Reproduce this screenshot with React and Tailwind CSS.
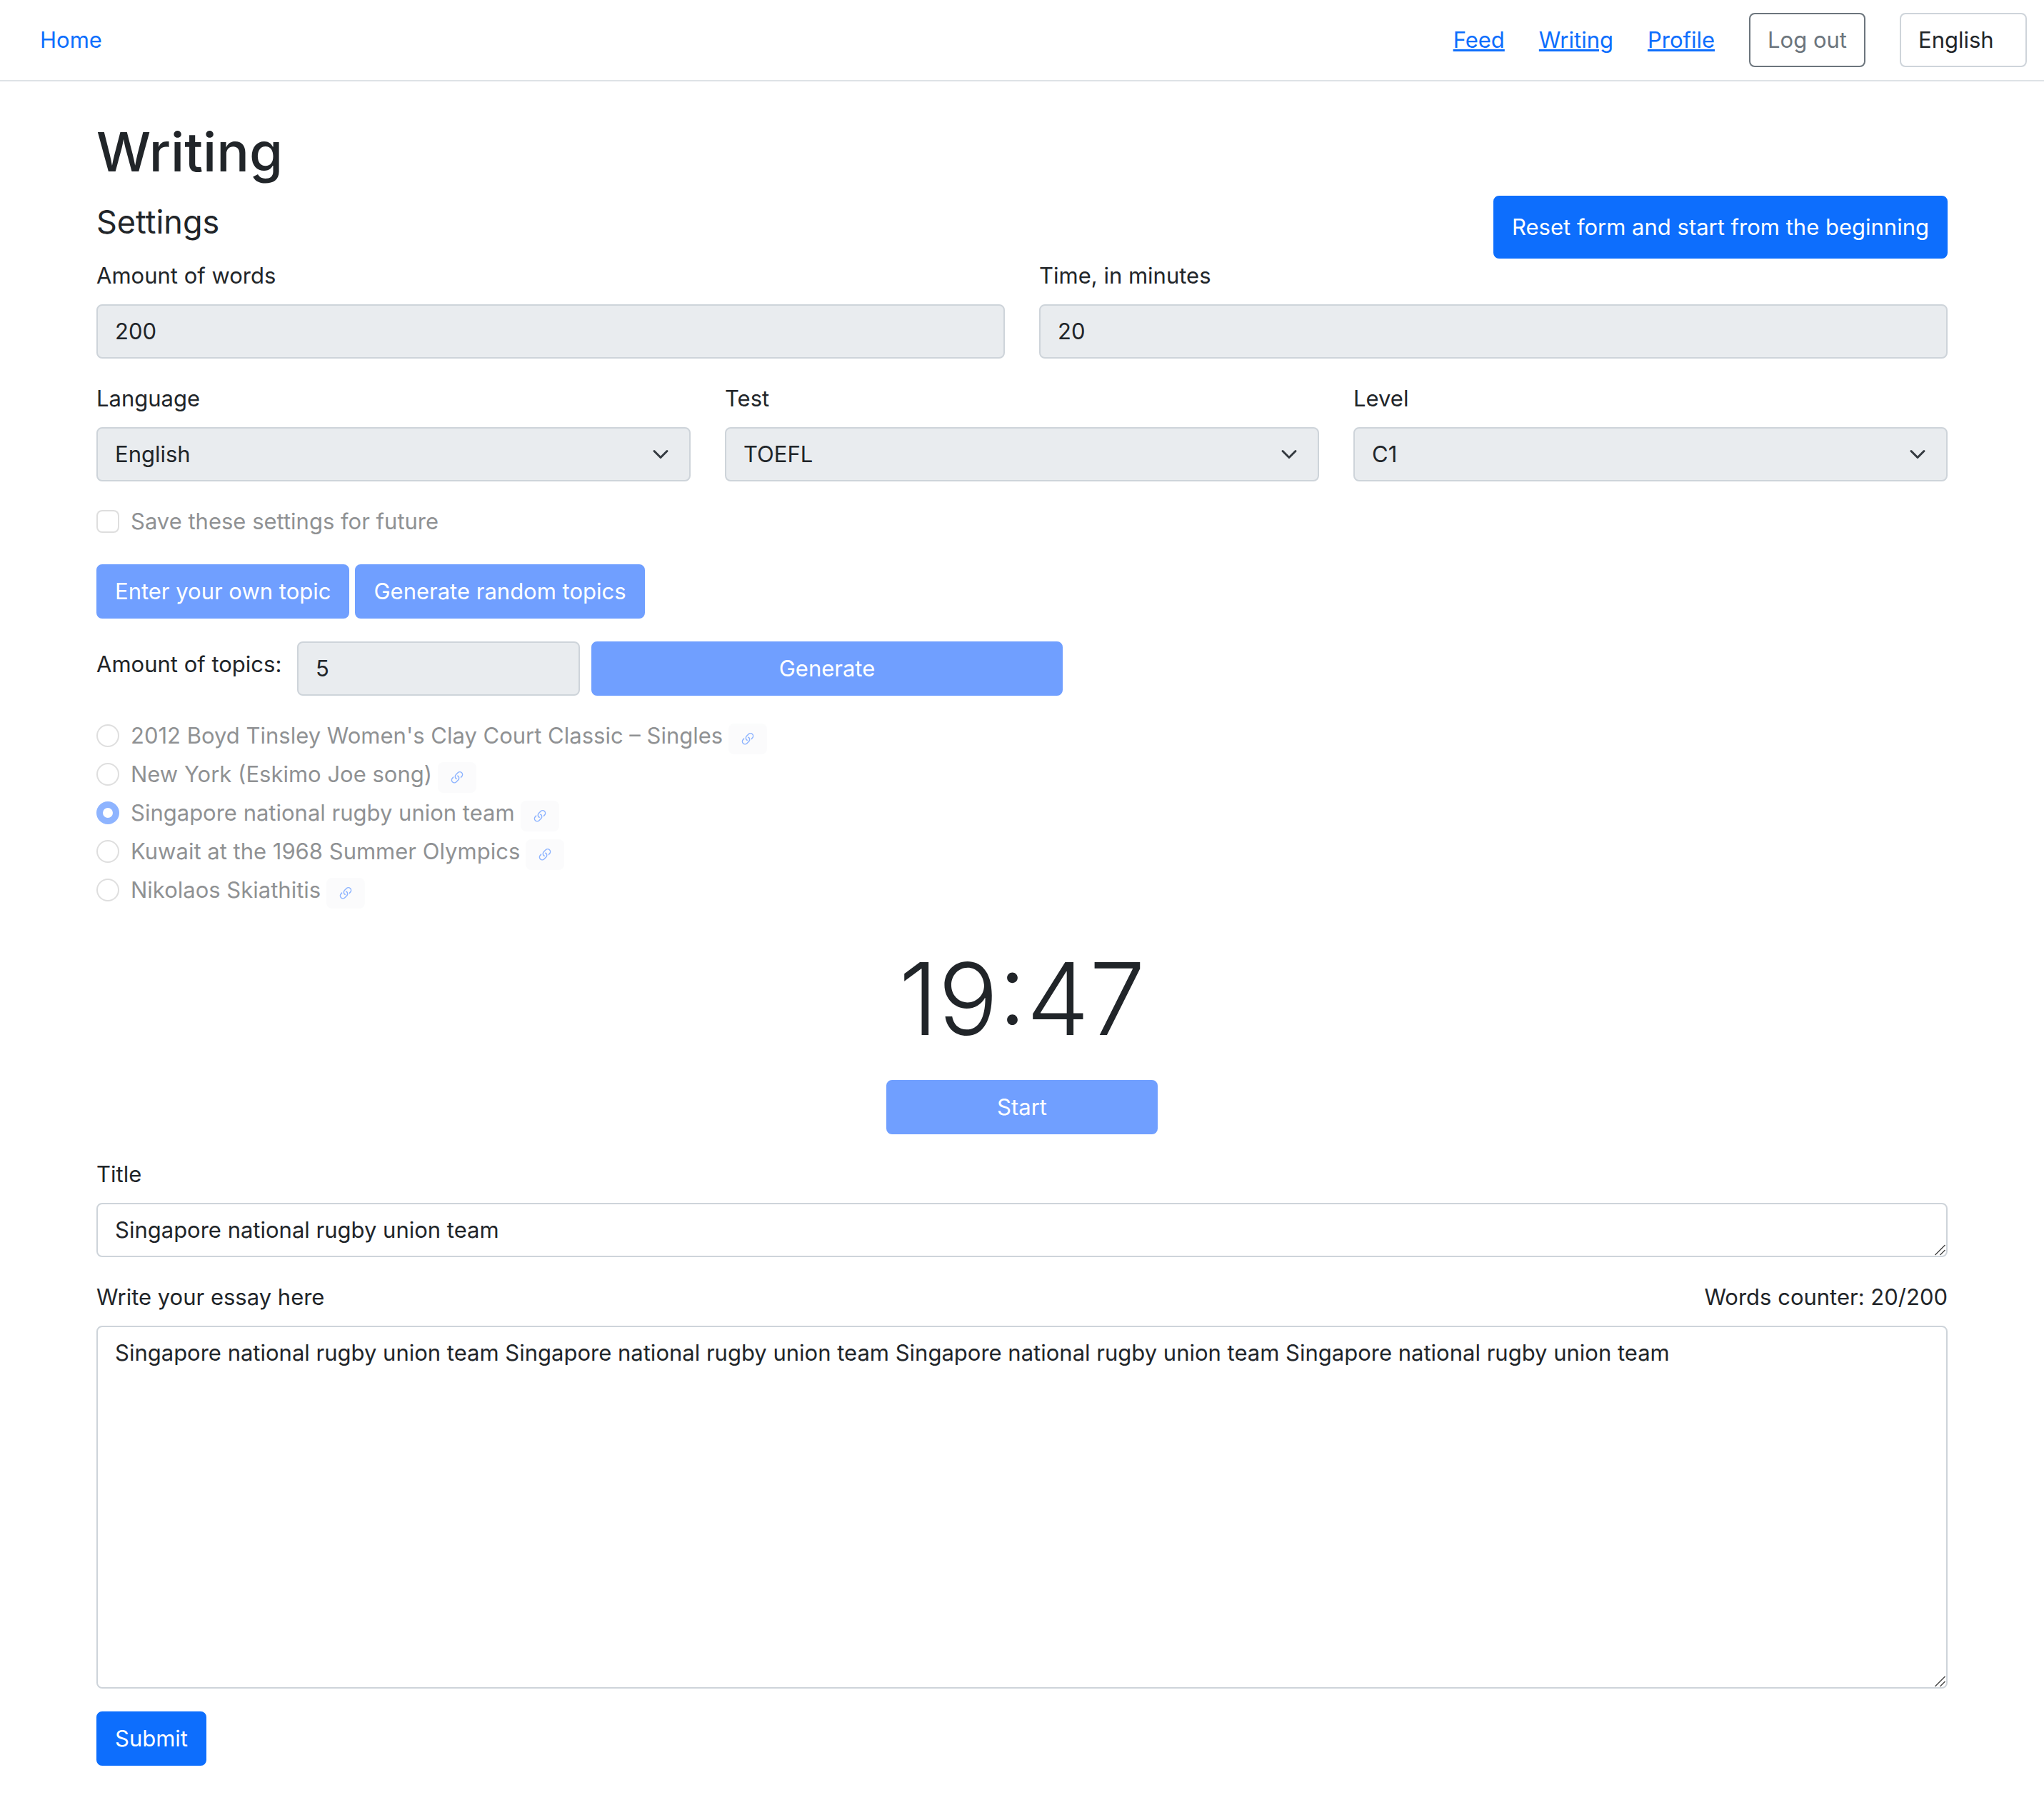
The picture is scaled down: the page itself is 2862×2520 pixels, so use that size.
import { BsLink45Deg } from "react-icons/bs";

const control =
  "block w-full rounded-lg border-2 border-[#ced4da] px-6 py-3 text-[#212529] outline-none disabled:bg-[#e9ecef] disabled:opacity-100";
const primary =
  "rounded-lg border-2 border-[#0d6efd] bg-[#0d6efd] px-6 py-3 text-white disabled:border-[#709fff] disabled:bg-[#709fff]";

const topics = [
  "2012 Boyd Tinsley Women's Clay Court Classic – Singles",
  "New York (Eskimo Joe song)",
  "Singapore national rugby union team",
  "Kuwait at the 1968 Summer Olympics",
  "Nikolaos Skiathitis",
];
const subject = "Singapore national rugby union team";

function Field({ id, label, children }) {
  return (
    <div className="min-w-0 flex-1">
      <label htmlFor={id} className="mb-4 block">
        {label}
      </label>
      {children}
    </div>
  );
}

function Select({ id, value }) {
  return (
    <div className="relative">
      <select id={id} disabled defaultValue={value} className={`${control} appearance-none`}>
        <option>{value}</option>
      </select>
      <svg
        viewBox="0 0 16 16"
        className="pointer-events-none absolute top-1/2 right-[30px] h-6 w-6 -translate-y-1/2"
        fill="none"
        stroke="#343a40"
        strokeWidth="2"
        strokeLinecap="round"
        strokeLinejoin="round"
        aria-hidden="true"
      >
        <path d="M2 5l6 6 6-6" />
      </svg>
    </div>
  );
}

function TextBox({ id, rows, value }) {
  return (
    <div className="relative">
      <textarea id={id} rows={rows} defaultValue={value} className={`${control} resize-none overflow-hidden`} />
      <svg
        viewBox="0 0 16 16"
        className="pointer-events-none absolute right-[2px] bottom-[2px] h-4 w-4"
        stroke="#444"
        strokeWidth="1.4"
        aria-hidden="true"
      >
        <path d="M0.5 15L14.500 1M7.500 15L14.500 8" />
      </svg>
    </div>
  );
}

export default function App() {
  return (
    <div className="min-h-screen bg-white font-['Inter',sans-serif] text-[31px] leading-[48px] text-[#212529]">
      <header className="flex items-center justify-between border-b-2 border-[#dee2e6] py-[18px] pr-6 pl-14">
        <a href="#home" className="text-[#0d6efd]">
          Home
        </a>
        <nav className="flex items-center gap-12">
          {["Feed", "Writing", "Profile"].map((name) => (
            <a key={name} href={`#${name.toLowerCase()}`} className="text-[#0d6efd] underline">
              {name}
            </a>
          ))}
          <button type="button" className="rounded-lg border-2 border-[#6c757d] px-6 py-3 text-[#6c757d]">
            Log out
          </button>
          <select
            aria-label="Site language"
            defaultValue="English"
            className="w-[178px] appearance-none rounded-lg border-2 border-[#ced4da] bg-white px-6 py-3"
          >
            <option>English</option>
          </select>
        </nav>
      </header>

      <main className="mx-auto max-w-[2640px] px-6 py-12">
        <h1 className="mb-4 pt-1 text-[76px] leading-[92px] font-medium">Writing</h1>

        <div className="flex h-[88px] items-stretch justify-between">
          <h2 className="pt-2 text-[45px] leading-[58px]">Settings</h2>
          <button type="button" className={primary}>
            Reset form and start from the beginning
          </button>
        </div>

        <form>
          <div className="mb-8 flex gap-12">
            <Field id="words" label="Amount of words">
              <input id="words" disabled defaultValue="200" className={control} />
            </Field>
            <Field id="minutes" label="Time, in minutes">
              <input id="minutes" disabled defaultValue="20" className={control} />
            </Field>
          </div>

          <div className="mb-8 flex gap-12">
            <Field id="language" label="Language">
              <Select id="language" value="English" />
            </Field>
            <Field id="test" label="Test">
              <Select id="test" value="TOEFL" />
            </Field>
            <Field id="level" label="Level">
              <Select id="level" value="C1" />
            </Field>
          </div>

          <div className="mb-9 flex items-center gap-4 opacity-50">
            <input
              id="save"
              type="checkbox"
              disabled
              className="h-8 w-8 appearance-none rounded-lg border-2 border-black/25 bg-white"
            />
            <label htmlFor="save">Save these settings for future</label>
          </div>

          <div className="mb-8 flex gap-2">
            <button type="button" disabled className={primary}>
              Enter your own topic
            </button>
            <button type="button" disabled className={primary}>
              Generate random topics
            </button>
          </div>

          <div className="mb-8 flex items-start">
            <label htmlFor="amount" className="w-[281px] pt-2">
              Amount of topics:
            </label>
            <div className="mr-4 w-[396px]">
              <input id="amount" disabled defaultValue="5" className={control} />
            </div>
            <button type="button" disabled className={`${primary} w-[660px]`}>
              Generate
            </button>
          </div>

          <ul className="mb-8">
            {topics.map((topic, i) => (
              <li key={topic} className="flex h-[54px] items-start opacity-50">
                <input
                  id={`topic-${i}`}
                  type="radio"
                  name="topic"
                  disabled
                  defaultChecked={topic === subject}
                  className="mt-2 mr-4 h-8 w-8 appearance-none rounded-full border-2 border-black/25 bg-white checked:border-[9px] checked:border-[#206bff]"
                />
                <label htmlFor={`topic-${i}`}>{topic}</label>
                <a
                  href={`#topic-${i}`}
                  aria-label={`Open ${topic}`}
                  className="mt-[7px] ml-2 flex h-[43px] w-[54px] items-center justify-center rounded-lg bg-[#f8f9fa] text-[#206bff]"
                >
                  <BsLink45Deg className="h-6 w-6" />
                </a>
              </li>
            ))}
          </ul>

          <div className="mb-8 flex flex-col items-center">
            <div className="mb-7 pt-1 text-[140px] leading-[172px] font-light">19:47</div>
            <button type="button" disabled className={`${primary} w-[380px]`}>
              Start
            </button>
          </div>

          <div className="mb-8">
            <label htmlFor="title" className="mb-4 block">
              Title
            </label>
            <TextBox id="title" rows={1} value={subject} />
          </div>

          <div className="mb-8">
            <div className="mb-4 flex justify-between">
              <label htmlFor="essay">Write your essay here</label>
              <span>Words counter: 20/200</span>
            </div>
            <TextBox id="essay" rows={10} value={Array(4).fill(subject).join(" ")} />
          </div>

          <button type="button" className={primary}>
            Submit
          </button>
        </form>
      </main>
    </div>
  );
}
